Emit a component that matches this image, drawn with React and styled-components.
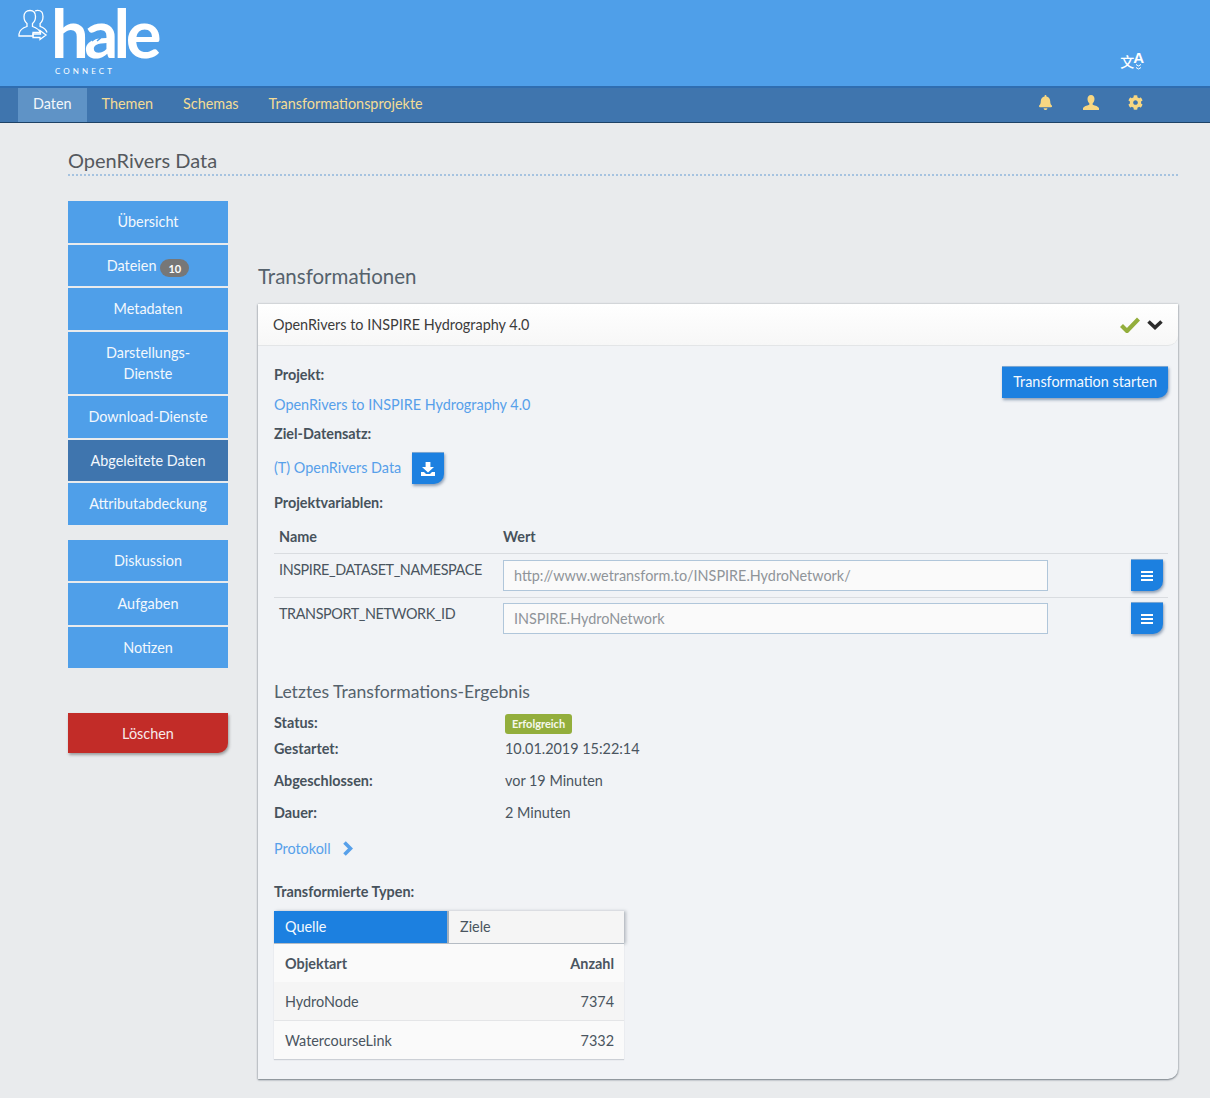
import React from "react";
import styled, { createGlobalStyle } from "styled-components";
import { FaBell, FaCog } from "react-icons/fa";

const Global = createGlobalStyle`
  html, body { margin: 0; padding: 0; }
  body {
    background: #e9ebed;
    color: #4a5560;
    font-family: Lato, "Open Sans", sans-serif;
    font-size: 14.4px;
    line-height: 21px;
  }
  * { box-sizing: border-box; }
`;

const Page = styled.div`
  width: 1210px;
  height: 1098px;
  overflow: hidden;
`;
const Header = styled.header`
  height: 86px;
  background: #4f9fe9;
  display: flex;
  justify-content: space-between;
  padding: 9px 66px 0 18px;
`;
const Logo = styled.div`
  display: flex;
  align-items: flex-start;
  color: #fff;
`;
const Wordmark = styled.div`
  position: relative;
  margin-left: 7px;
  width: 110px;
`;
const Hale = styled.div`
  font-family: Lato, sans-serif;
  font-size: 67px;
  font-weight: 700;
  line-height: 67px;
  letter-spacing: -4.6px;
  height: 67px;
  margin: -10px 0 0 -4px;
`;
const HaleArrow = styled.svg`
  position: absolute;
  left: 36px;
  top: 26px;
`;
const Connect = styled.div`
  font-family: Lato, sans-serif;
  font-size: 8px;
  line-height: 10px;
  letter-spacing: 3.1px;
`;
const Lang = styled.div`
  display: flex;
  align-items: flex-start;
  color: #fff;
  margin-top: 42px;
  height: 24px;
`;
const LangCn = styled.span`
  font-family: "Noto Sans CJK SC", sans-serif;
  font-size: 14px;
  font-weight: 500;
  line-height: 18px;
  margin-top: 1px;
`;
const LangA = styled.span`
  display: flex;
  flex-direction: column;
  align-items: center;
  font-family: "Liberation Sans", sans-serif;
  font-size: 15px;
  font-weight: 700;
  line-height: 13px;
  margin-left: -1px;
`;
const Nav = styled.nav`
  height: 37px;
  background: #3f75ae;
  border-top: 2px solid #2f6db0;
  border-bottom: 1px solid #1e4266;
  display: flex;
  justify-content: space-between;
  padding: 0 67px 0 18px;
`;
const Tabs = styled.div`
  display: flex;
`;
const Tab = styled.div`
  padding: 5px 15px 0;
  height: 34px;
  color: ${p => (p.$active ? "#f3f7fb" : "#f4dc95")};
  background: ${p => (p.$active ? "#5f93c6" : "transparent")};
`;
const NavIcons = styled.div`
  display: flex;
  align-items: center;
  gap: 29.5px;
  color: #f8d782;
  font-size: 15px;
  height: 29px;
`;
const Content = styled.main`
  padding: 25px 32px 0 68px;
`;
const PageTitle = styled.h1`
  margin: 0;
  font-size: 20px;
  font-weight: 400;
  line-height: 24px;
  color: #55595e;
  border-bottom: 2px dotted #a6c3e0;
  height: 28px;
`;
const Columns = styled.div`
  display: flex;
  gap: 30px;
  margin-top: 25px;
`;
const Side = styled.aside`
  width: 160px;
  display: flex;
  flex-direction: column;
  flex-shrink: 0;
`;
const SideGroup = styled.div`
  display: flex;
  flex-direction: column;
  gap: 2px;
  margin-bottom: ${p => p.$after || 0}px;
`;
const SideItem = styled.div`
  background: ${p => (p.$active ? "#3f75ae" : "#4f9fe9")};
  color: #f3f8fd;
  text-align: center;
  padding: 10.25px 20px;
`;
const Badge = styled.span`
  display: inline-block;
  background: #777;
  color: #fff;
  font-size: 11px;
  font-weight: 700;
  line-height: 15px;
  padding: 2px 8px 1px;
  border-radius: 10px;
  margin: -3px 0 -3px 4px;
  vertical-align: -2px;
`;
const DeleteBtn = styled.div`
  background: #c22c28;
  color: #f7eaea;
  text-align: center;
  height: 40px;
  padding-top: 10px;
  border-radius: 0 0 10px 0;
  box-shadow: 1px 2px 3px rgba(60, 60, 60, 0.45);
`;
const Main = styled.section`
  flex: 1;
  padding-top: 61px;
`;
const SectionTitle = styled.h2`
  margin: 0 0 14px;
  font-size: 20.5px;
  font-weight: 400;
  line-height: 28px;
  color: #55626c;
`;
const Card = styled.div`
  background: #f1f3f6;
  height: 775px;
  border-radius: 0 0 10px 0;
  box-shadow: 0 1px 2px rgba(80, 90, 100, 0.7), 0 0 2px rgba(80, 90, 100, 0.4);
`;
const CardHead = styled.div`
  height: 42px;
  display: flex;
  align-items: center;
  justify-content: space-between;
  padding: 0 15px;
  color: #3c3c3c;
  background: linear-gradient(#fff, #f7f7f7);
  border-bottom: 1px solid #e3e5e7;
  border-radius: 0 0 10px 0;
`;
const HeadIcons = styled.div`
  display: flex;
  align-items: center;
  gap: 7px;
`;
const CardBody = styled.div`
  padding: 18px 10px 0 16px;
`;
const TopRow = styled.div`
  display: flex;
  justify-content: space-between;
  margin-bottom: 8px;
`;
const Label = styled.div`
  font-weight: 700;
  color: #47525c;
  margin-bottom: ${p => p.$mb || 0}px;
`;
const Link = styled.span`
  color: #57a0ea;
`;
const DatasetLink = styled(Link)`
  padding-bottom: 2px;
`;
const Btn = styled.div`
  background: #1c80e0;
  color: #f4f9fe;
  border-radius: 0 0 10px 0;
  box-shadow: 1px 2px 3px rgba(50, 80, 120, 0.5);
  border-top: 1px solid #7aa6d2;
  height: 32px;
  padding: 4px 11px 0;
  margin-top: 2px;
`;
const IconBtn = styled(Btn)`
  width: 32px;
  padding: 0;
  margin: 0;
  display: flex;
  align-items: center;
  justify-content: center;
  flex-shrink: 0;
`;
const Dataset = styled.div`
  display: flex;
  align-items: center;
  gap: 11px;
  margin: 8px 0;
  height: 32px;
`;
const VarHead = styled.div`
  display: grid;
  grid-template-columns: 224px 1fr;
  padding: 0 5px;
  margin-top: 13px;
  height: 27px;
  font-weight: 700;
  color: #47525c;
`;
const VarName = styled.div`
  letter-spacing: -0.4px;
`;
const VarInput = styled.div`
  height: 31px;
  margin-top: 1px;
  background: #fafafa;
  border: 1px solid #b0c6da;
  color: #8f9499;
  padding: 4px 10px 0;
`;
const VarAction = styled.div`
  display: flex;
  justify-content: flex-end;
`;
const VarRow = styled.div`
  display: grid;
  grid-template-columns: 224px 545px 1fr;
  padding: 5px 5px 0;
  height: 44px;
  border-top: 1px solid #d9dce0;
  align-items: start;
  color: #4a5560;
  & + & ${VarInput} {
    margin-top: 0;
  }
  & + & ${VarAction} {
    margin-top: -1px;
  }
`;
const ResultTitle = styled.h3`
  margin: 39px 0 8px;
  font-size: 17.6px;
  font-weight: 400;
  line-height: 24px;
  color: #55626c;
`;
const StatusRow = styled.div`
  display: grid;
  grid-template-columns: 231px 1fr;
  height: ${p => p.$h || 32}px;
`;
const Pill = styled.span`
  display: inline-block;
  background: #93ae3c;
  color: #f6f8ec;
  font-size: 11px;
  font-weight: 700;
  line-height: 20px;
  height: 20px;
  padding: 0 7px;
  border-radius: 3px;
`;
const Protocol = styled.div`
  display: flex;
  align-items: center;
  gap: 11px;
  margin-top: 4px;
`;
const TypesLabel = styled(Label)`
  margin-top: 22px;
  margin-bottom: 9px;
`;
const Types = styled.div`
  width: 350px;
  background: #fafafa;
  box-shadow: 0 1px 1px rgba(120, 130, 140, 0.3);
`;
const TabBar = styled.div`
  display: grid;
  grid-template-columns: 175px 1fr;
  height: 33px;
  border-bottom: 1px solid #b5bcc4;
  box-shadow: 2px 0 3px rgba(100, 110, 120, 0.4);
`;
const TypeTab = styled.div`
  padding: 5px 11px 0;
  color: ${p => (p.$active ? "#f4f9fe" : "#4a5560")};
  background: ${p => (p.$active ? "#1c80e0" : "#f5f5f5")};
  border-right: ${p => (p.$active ? "2px solid #a4b0bb" : "none")};
`;
const TypeRow = styled.div`
  display: flex;
  justify-content: space-between;
  padding: 0 10px 0 11px;
  align-items: center;
  height: ${p => p.$h}px;
  font-weight: ${p => (p.$head ? 700 : 400)};
  background: ${p => (p.$odd ? "#f5f5f5" : "#fafafa")};
  border-bottom: ${p => (p.$line ? "1px solid #e4e5e7" : "none")};
`;

function TranslateMark() {
  return (
    <Lang>
      <LangCn>文</LangCn>
      <LangA>
        A
        <svg width="7" height="6" viewBox="0 0 7 6" fill="none" stroke="#fff" strokeWidth="1">
          <path d="M1 0.5 L3.5 2 L6 0.5 M1 3.500 L3.500 5 L6 3.500" />
        </svg>
      </LangA>
    </Lang>
  );
}

function SaveIcon() {
  return (
    <svg width="14" height="14" viewBox="0 0 14 14" fill="#fff">
      <path d="M4.6 0h4.8v5H13L7 10.5 1 5h3.6z" />
      <path d="M0 10h3l2 2h4l2-2h3v4H0z" />
    </svg>
  );
}

function MenuIcon() {
  return (
    <svg width="12" height="10" viewBox="0 0 12 10" fill="#fff">
      <rect y="0" width="12" height="2" />
      <rect y="4" width="12" height="2" />
      <rect y="8" width="12" height="2" />
    </svg>
  );
}

function UserIcon() {
  return (
    <svg width="16" height="15" viewBox="0 0 16 15" fill="#f8d782">
      <path d="M8 0c2.300 0 3.500 1.700 3.500 4 0 1.800-.8 3.500-1.800 4.300v1.500c2.800.8 5.300 1.700 6.300 3.200v2H0v-2c1-1.500 3.500-2.400 6.300-3.200V8.300C5.300 7.500 4.500 5.800 4.500 4 4.500 1.700 5.700 0 8 0z" />
    </svg>
  );
}

function CheckIcon() {
  return (
    <svg width="20" height="16" viewBox="0 0 20 16" fill="none" stroke="#93ae3c" strokeWidth="4.2">
      <path d="M1.500 8.500 L7 14 L18.500 2" />
    </svg>
  );
}

function ChevronIcon({ color, dir }) {
  return dir === "right" ? (
    <svg width="11" height="15" viewBox="0 0 11 15" fill="none" stroke={color} strokeWidth="3.6">
      <path d="M2.500 1.500 L8.500 7.500 L2.500 13.500" />
    </svg>
  ) : (
    <svg width="16" height="11" viewBox="0 0 16 11" fill="none" stroke={color} strokeWidth="3.6">
      <path d="M1.500 2.500 L8 8.500 L14.500 2.500" />
    </svg>
  );
}

function PeopleMark() {
  return (
    <svg width="30" height="38" viewBox="0 0 30 38" fill="none" stroke="#fff" strokeWidth="1.3">
      <path d="M12 1.500c3.500 0 5.500 2.600 5.500 6 0 3-1.200 5.600-3 7v3c4 1.300 7 3 8 6.500v1H15v2H1v-2c.6-4 3.600-6.200 8-7.500v-3c-1.800-1.400-3-4-3-7 0-3.400 2.200-6 6-6z" />
      <path d="M17 2c.8-.4 1.700-.6 2.600-.6 3.600 0 5.400 2.600 5.400 6 0 3-1.100 5.600-2.900 7v3c3.500 1.200 6 2.900 6.900 6.100" />
      <path d="M15 24.500h7v-2l6 4.500-6 4.500v-2h-7z" transform="translate(0 -1)" />
    </svg>
  );
}

function BrandLogo() {
  return (
    <Logo>
      <PeopleMark />
      <Wordmark>
        <Hale>hale</Hale>
        <HaleArrow width="11" height="7" viewBox="0 0 11 7" fill="none" stroke="#4f9fe9" strokeWidth="1.6">
          <path d="M1 1 L4 3.500 L1 6 M6 1 L9 3.500 L6 6" />
        </HaleArrow>
        <Connect>CONNECT</Connect>
      </Wordmark>
    </Logo>
  );
}

const menuOne = [
  { label: "Übersicht" },
  { label: "Dateien", badge: 10 },
  { label: "Metadaten" },
  { label: "Darstellungs-Dienste" },
  { label: "Download-Dienste" },
  { label: "Abgeleitete Daten", active: true },
  { label: "Attributabdeckung" },
];
const menuTwo = ["Diskussion", "Aufgaben", "Notizen"];
const vars = [
  { name: "INSPIRE_DATASET_NAMESPACE", value: "http://www.wetransform.to/INSPIRE.HydroNetwork/" },
  { name: "TRANSPORT_NETWORK_ID", value: "INSPIRE.HydroNetwork" },
];

export default function App() {
  return (
    <Page>
      <Global />
      <Header>
        <BrandLogo />
        <TranslateMark />
      </Header>
      <Nav>
        <Tabs>
          <Tab $active>Daten</Tab>
          <Tab>Themen</Tab>
          <Tab>Schemas</Tab>
          <Tab>Transformationsprojekte</Tab>
        </Tabs>
        <NavIcons>
          <FaBell />
          <UserIcon />
          <FaCog />
        </NavIcons>
      </Nav>
      <Content>
        <PageTitle>OpenRivers Data</PageTitle>
        <Columns>
          <Side>
            <SideGroup $after={15}>
              {menuOne.map(m => (
                <SideItem key={m.label} $active={m.active}>
                  {m.label}
                  {m.badge && <Badge>{m.badge}</Badge>}
                </SideItem>
              ))}
            </SideGroup>
            <SideGroup $after={45}>
              {menuTwo.map(m => (
                <SideItem key={m}>{m}</SideItem>
              ))}
            </SideGroup>
            <DeleteBtn>Löschen</DeleteBtn>
          </Side>
          <Main>
            <SectionTitle>Transformationen</SectionTitle>
            <Card>
              <CardHead>
                OpenRivers to INSPIRE Hydrography 4.0
                <HeadIcons>
                  <CheckIcon />
                  <ChevronIcon color="#2c2c2c" />
                </HeadIcons>
              </CardHead>
              <CardBody>
                <TopRow>
                  <div>
                    <Label $mb={9}>Projekt:</Label>
                    <Link>OpenRivers to INSPIRE Hydrography 4.0</Link>
                  </div>
                  <Btn>Transformation starten</Btn>
                </TopRow>
                <Label>Ziel-Datensatz:</Label>
                <Dataset>
                  <DatasetLink>(T) OpenRivers Data</DatasetLink>
                  <IconBtn><SaveIcon /></IconBtn>
                </Dataset>
                <Label>Projektvariablen:</Label>
                <VarHead>
                  <div>Name</div>
                  <div>Wert</div>
                </VarHead>
                {vars.map(v => (
                  <VarRow key={v.name}>
                    <VarName>{v.name}</VarName>
                    <VarInput>{v.value}</VarInput>
                    <VarAction>
                      <IconBtn><MenuIcon /></IconBtn>
                    </VarAction>
                  </VarRow>
                ))}
                <ResultTitle>Letztes Transformations-Ergebnis</ResultTitle>
                <StatusRow $h={26}>
                  <Label>Status:</Label>
                  <div><Pill>Erfolgreich</Pill></div>
                </StatusRow>
                <StatusRow>
                  <Label>Gestartet:</Label>
                  <div>10.01.2019 15:22:14</div>
                </StatusRow>
                <StatusRow>
                  <Label>Abgeschlossen:</Label>
                  <div>vor 19 Minuten</div>
                </StatusRow>
                <StatusRow>
                  <Label>Dauer:</Label>
                  <div>2 Minuten</div>
                </StatusRow>
                <Protocol>
                  <Link>Protokoll</Link>
                  <ChevronIcon color="#57a0ea" dir="right" />
                </Protocol>
                <TypesLabel>Transformierte Typen:</TypesLabel>
                <Types>
                  <TabBar>
                    <TypeTab $active>Quelle</TypeTab>
                    <TypeTab>Ziele</TypeTab>
                  </TabBar>
                  <TypeRow $h={38} $head><span>Objektart</span><span>Anzahl</span></TypeRow>
                  <TypeRow $h={39} $odd $line><span>HydroNode</span><span>7374</span></TypeRow>
                  <TypeRow $h={38}><span>WatercourseLink</span><span>7332</span></TypeRow>
                </Types>
              </CardBody>
            </Card>
          </Main>
        </Columns>
      </Content>
    </Page>
  );
}
